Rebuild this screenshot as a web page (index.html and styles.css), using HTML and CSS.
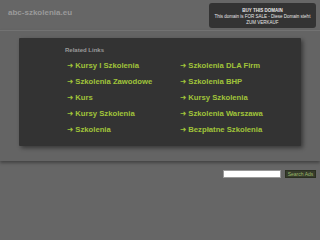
FILE: index.html
```html
<!DOCTYPE html>
<html>
<head>
<meta charset="utf-8">
<link rel="stylesheet" href="styles.css">
</head>
<body>
<header class="top">
  <div class="domain">abc-szkolenia.eu</div>
  <div class="buy">
    <div class="buy-title">BUY THIS DOMAIN</div>
    <div>This domain is FOR SALE - Diese Domain steht</div>
    <div>ZUM VERKAUF</div>
  </div>
</header>
<section class="band">
  <div class="panel">
    <div class="related">Related Links</div>
    <div class="links">
      <a class="link" href="#"><span class="arr">➜</span>Kursy I Szkolenia</a>
      <a class="link" href="#"><span class="arr">➜</span>Szkolenia DLA Firm</a>
      <a class="link" href="#"><span class="arr">➜</span>Szkolenia Zawodowe</a>
      <a class="link" href="#"><span class="arr">➜</span>Szkolenia BHP</a>
      <a class="link" href="#"><span class="arr">➜</span>Kurs</a>
      <a class="link" href="#"><span class="arr">➜</span>Kursy Szkolenia</a>
      <a class="link" href="#"><span class="arr">➜</span>Kursy Szkolenia</a>
      <a class="link" href="#"><span class="arr">➜</span>Szkolenia Warszawa</a>
      <a class="link" href="#"><span class="arr">➜</span>Szkolenia</a>
      <a class="link" href="#"><span class="arr">➜</span>Bezpłatne Szkolenia</a>
    </div>
  </div>
</section>
<div class="search">
  <input class="search-input" type="text">
  <button class="search-btn">Search Ads</button>
</div>
</body>
</html>
```
FILE: styles.css
```css
html, body {
  margin: 0;
  padding: 0;
}
body {
  background: #666666;
  font-family: "Liberation Sans", Arial, sans-serif;
  width: 320px;
  height: 240px;
  overflow: hidden;
}
.top {
  height: 30px;
  display: flex;
  justify-content: space-between;
  align-items: flex-start;
  box-sizing: border-box;
}
.domain {
  margin: 8px 0 0 8px;
  font-size: 8px;
  line-height: 10px;
  font-weight: bold;
  color: #9a9a9a;
}
.buy {
  margin: 3px 4px 0 0;
  width: 107px;
  height: 25px;
  box-sizing: border-box;
  background: #333333;
  border-radius: 3px;
  color: #e8e8e8;
  font-size: 4.5px;
  line-height: 5.5px;
  text-align: center;
  padding-top: 5px;
}
.buy-title {
  font-weight: bold;
  margin-bottom: 0.5px;
}
.band {
  border-top: 1px solid #727272;
  background: #646464;
  padding: 7px 19px 15px 19px;
  box-shadow: 0 2px 3px rgba(0, 0, 0, 0.35);
}
.panel {
  background: #333333;
  height: 108px;
  box-sizing: border-box;
  padding: 8px 0 0 46px;
  box-shadow: 2px 2px 4px rgba(0, 0, 0, 0.45);
  border-radius: 1px;
}
.related {
  font-size: 6px;
  line-height: 8px;
  font-weight: bold;
  color: #9a9a9a;
}
.links {
  margin: 4px 0 0 2px;
  display: grid;
  grid-template-columns: 113px 113px;
}
.link {
  display: flex;
  align-items: center;
  gap: 2px;
  font-size: 7.7px;
  line-height: 16px;
  font-weight: bold;
  color: #a0c43a;
  text-decoration: none;
  white-space: nowrap;
}
.arr {
  font-family: "DejaVu Sans", sans-serif;
  font-size: 7.5px;
  font-weight: bold;
}
.search {
  display: flex;
  justify-content: flex-end;
  align-items: center;
  gap: 4px;
  margin: 9px 4px 0 0;
}
.search-input {
  width: 58px;
  height: 8px;
  box-sizing: border-box;
  border: 1px solid #999;
  background: #fff;
  padding: 0;
  margin: 0;
}
.search-btn {
  height: 8px;
  width: 31px;
  box-sizing: border-box;
  padding: 0;
  margin: 0;
  border: 1px solid #2a2f20;
  background: #363b2b;
  color: #9cb86a;
  font-family: "Liberation Sans", Arial, sans-serif;
  font-size: 5px;
  line-height: 6px;
}
```
